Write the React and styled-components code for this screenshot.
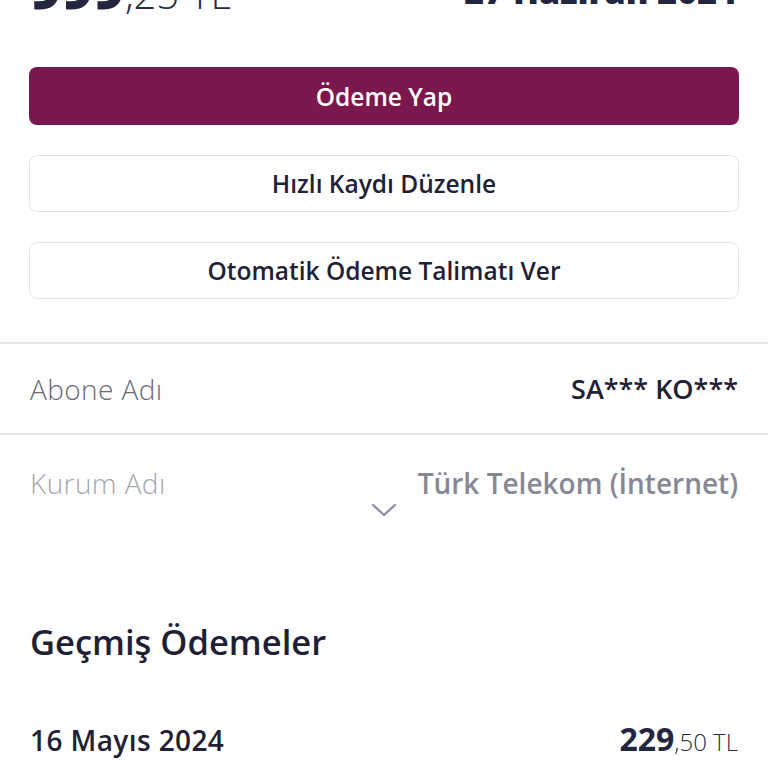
import React from "react";
import styled, { createGlobalStyle } from "styled-components";

const FONT = `"Open Sans", "Noto Sans", sans-serif`;

const Global = createGlobalStyle`
  html, body { margin: 0; padding: 0; background: #ffffff; }
  body { font-family: ${FONT}; color: #1f2136; overflow: hidden; }
  * { box-sizing: border-box; }
`;

const Page = styled.div`
  width: 768px;
  height: 768px;
  overflow: hidden;
  background: #fff;
`;

const Summary = styled.div`
  display: flex;
  justify-content: space-between;
  align-items: flex-end;
  padding: 0 31px 0 30px;
  margin-top: -31px;
  height: 46px;
`;

const Amount = styled.div`
  display: flex;
  align-items: baseline;
  line-height: 1;
  color: #222640;
`;

const AmountMain = styled.span`
  font-size: ${(p) => p.$size}px;
  font-weight: ${(p) => p.$weight || 800};
`;

const AmountFraction = styled.span`
  font-size: ${(p) => p.$size}px;
  font-weight: 300;
  color: #2b2d3e;
`;

const DueDate = styled.div`
  font-size: 34px;
  font-weight: 800;
  line-height: 1;
  color: #222640;
  margin-bottom: 7px;
`;

const Actions = styled.div`
  display: flex;
  flex-direction: column;
  gap: 30px;
  padding: 0 29px;
  margin-top: 52px;
`;

const ActionButton = styled.button`
  height: ${(p) => (p.$primary ? 58 : 57)}px;
  width: 100%;
  border-radius: 8px;
  border: ${(p) => (p.$primary ? "none" : "1.5px solid #e4e4e8")};
  background: ${(p) => (p.$primary ? "#7a184e" : "#ffffff")};
  color: ${(p) => (p.$primary ? "#ffffff" : "#1f2136")};
  font-family: ${FONT};
  font-size: 24.5px;
  font-weight: 600;
  display: flex;
  align-items: center;
  justify-content: center;
  padding: 0;
`;

const Divider = styled.div`
  height: 2px;
  background: #e6e6ea;
  margin-top: ${(p) => p.$top || 0}px;
`;

const InfoRow = styled.div`
  display: flex;
  justify-content: space-between;
  align-items: center;
  height: ${(p) => p.$h}px;
  padding: 0 30px 0 30px;
  line-height: 34px;
`;

const Label = styled.span`
  font-size: 28px;
  letter-spacing: 0.4px;
  font-weight: 300;
  color: ${(p) => (p.$muted ? "#a6a6ae" : "#6b6b72")};
`;

const Value = styled.span`
  font-size: ${(p) => (p.$muted ? 28 : 27)}px;
  font-weight: 600;
  color: ${(p) => (p.$muted ? "#868896" : "#1f2136")};
`;

const Toggle = styled.div`
  display: flex;
  justify-content: center;
  height: 14px;
  margin-top: -28px;
  color: #8a8ca0;
`;

const SectionTitle = styled.h2`
  margin: 105px 0 0 0;
  padding: 0 30px;
  font-size: 34.5px;
  font-weight: 600;
  line-height: 40px;
  color: #1e2136;
`;

const PaymentRow = styled.div`
  display: flex;
  justify-content: space-between;
  align-items: baseline;
  padding: 0 30px;
  margin-top: 60px;
  line-height: 36px;
`;

const PaymentDate = styled.span`
  font-size: 28px;
  letter-spacing: 0.4px;
  font-weight: 600;
  color: #1f2136;
`;

const Chevron = () => (
  <svg width="26" height="14" viewBox="0 0 26 14" fill="none">
    <path d="M2 2 L13 12 L24 2" stroke="currentColor" strokeWidth="2.2" strokeLinecap="round" strokeLinejoin="round" />
  </svg>
);

export default function App() {
  return (
    <Page>
      <Global />
      <Summary>
        <Amount>
          <AmountMain $size={54}>999</AmountMain>
          <AmountFraction $size={40}>,25 TL</AmountFraction>
        </Amount>
        <DueDate>27 Haziran 2024</DueDate>
      </Summary>

      <Actions>
        <ActionButton $primary>Ödeme Yap</ActionButton>
        <ActionButton>Hızlı Kaydı Düzenle</ActionButton>
        <ActionButton>Otomatik Ödeme Talimatı Ver</ActionButton>
      </Actions>

      <Divider $top={43} />
      <InfoRow $h={89}>
        <Label>Abone Adı</Label>
        <Value>SA*** KO***</Value>
      </InfoRow>
      <Divider />
      <InfoRow $h={96}>
        <Label $muted>Kurum Adı</Label>
        <Value $muted>Türk Telekom (İnternet)</Value>
      </InfoRow>
      <Toggle>
        <Chevron />
      </Toggle>

      <SectionTitle>Geçmiş Ödemeler</SectionTitle>

      <PaymentRow>
        <PaymentDate>16 Mayıs 2024</PaymentDate>
        <Amount>
          <AmountMain $size={32} $weight={700}>229</AmountMain>
          <AmountFraction $size={24}>,50 TL</AmountFraction>
        </Amount>
      </PaymentRow>
    </Page>
  );
}
